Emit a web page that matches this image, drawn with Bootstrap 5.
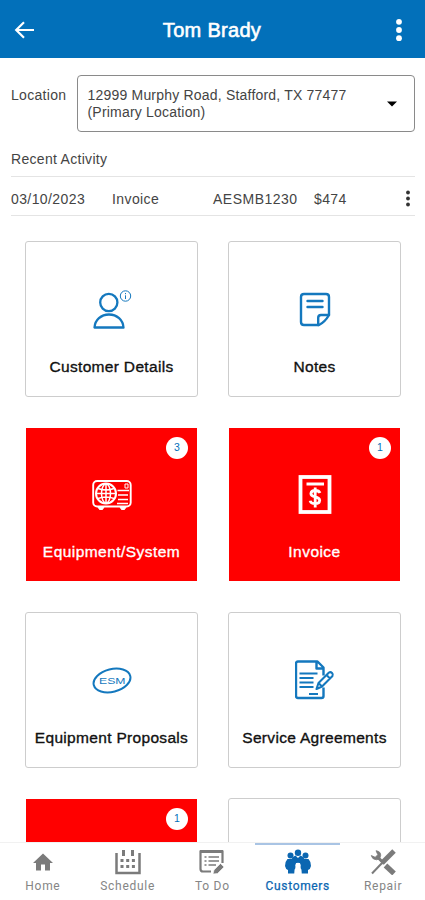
<!DOCTYPE html>
<html lang="en">
<head>
<meta charset="utf-8">
<meta name="viewport" content="width=device-width, initial-scale=1">
<title>Tom Brady</title>
<link rel="stylesheet" href="https://cdn.jsdelivr.net/npm/bootstrap@5.3.0/dist/css/bootstrap.min.css">
<style>
  body { font-family: "Liberation Sans", Arial, sans-serif; color: #444; font-size: 14px; }
  svg { display: block; }
  .screen { height: 900px; overflow: hidden; }
  .topbar { height: 58px; background: #0270ba; padding: 2px 15px 0 14px; }
  .topbar h1 { font-size: 20px; line-height: 24px; letter-spacing: .3px; -webkit-text-stroke: .6px #fff; font-weight: 400; }
  .location { padding: 17px 10px 0 11px; }
  .loc-label { width: 65.5px; padding-top: 12px; line-height: 17px; letter-spacing: .3px; }
  .loc-select { height: 57px; border: 1px solid #8a8a8a; border-radius: 4px; padding: 0 17px 0 10px; line-height: 17px; letter-spacing: .2px; }
  .activity { margin: 0 10px 0 11px; }
  .activity h2 { font-size: 14px; line-height: 17px; margin: 0; padding: 19px 0 8px; letter-spacing: .3px; height: 44px; }
  .activity-row { height: 40px; border-top: 1.5px solid #e4e4e4; border-bottom: 1.5px solid #e4e4e4; padding-top: 6px; }
  .c-date { width: 101px; letter-spacing: .4px; }
  .c-type { width: 101px; letter-spacing: .4px; }
  .c-num { width: 101px; letter-spacing: .5px; }
  .c-sum { letter-spacing: .4px; }
  .tiles { display: grid; grid-template-columns: 173px 173px; column-gap: 30px; grid-auto-rows: 156px; row-gap: 29.5px; padding: 25px 0 0 25px; }
  .tile { border: 1.5px solid #cdcdcd; border-radius: 3px; background: #fff; color: #111; }
  .tile.alerting { background: red; color: #fff; border: 0; border-radius: 0; margin: 1px 1px 2px; }
  .tile-icon { height: 40px; margin-top: 47px; }
  .tile-name { margin-top: 28px; font-size: 15.5px; line-height: 20px; letter-spacing: .32px; white-space: nowrap; -webkit-text-stroke: .35px currentColor; }
  .alerting .tile-name { margin-top: 27px; letter-spacing: .45px; }
  .count { top: 9px; right: 9px; width: 22px; height: 22px; background: #fff; color: #0270ba; font-size: 10.5px; }
  .tabs { height: 58px; background: #fff; border-top: 1px solid #f1f1f1; font-family: Roboto, sans-serif; font-size: 12px; letter-spacing: .7px; }
  .tab-item { flex: 1 1 0; border-top: 2px solid transparent; padding: 4px 0 0 1px; color: #858585; }
  .tab-item span { line-height: 16px; margin-top: 3px; }
  .tab-item.current { color: #0b66b1; letter-spacing: .65px; -webkit-text-stroke: .25px currentColor; }
  .tab-item.current::before { content: ""; width: 85px; height: 2px; background: #a9c4e4; margin: -6px 0 4px; }
</style>
</head>
<body>
<div class="screen d-flex flex-column position-relative bg-white">
  <header class="topbar d-flex align-items-center justify-content-between text-white flex-shrink-0">
    <svg width="22" height="20" viewBox="0 0 22 20" fill="none" stroke="#fff" stroke-width="2.200"><path d="M20 10H2.500M10 2.300 2.200 10l7.800 7.700"/></svg>
    <h1 class="m-0">Tom Brady</h1>
    <svg width="22" height="26" viewBox="0 0 22 26" fill="#fff"><circle cx="11" cy="4.800" r="2.900"/><circle cx="11" cy="13" r="2.900"/><circle cx="11" cy="21.200" r="2.900"/></svg>
  </header>

  <main class="flex-grow-1 overflow-hidden">
    <div class="location d-flex">
      <div class="loc-label flex-shrink-0">Location</div>
      <div class="loc-select flex-grow-1 d-flex align-items-center justify-content-between">
        <div>12999 Murphy Road, Stafford, TX 77477<br>(Primary Location)</div>
        <svg width="10" height="6" viewBox="0 0 10 6"><path d="M0 .5h10L5 5.500z" fill="#000"/></svg>
      </div>
    </div>

    <section class="activity">
      <h2>Recent Activity</h2>
      <div class="activity-row d-flex align-items-center">
        <div class="c-date">03/10/2023</div>
        <div class="c-type">Invoice</div>
        <div class="c-num">AESMB1230</div>
        <div class="c-sum">$474</div>
        <svg class="ms-auto me-1" width="6" height="18" viewBox="0 0 6 18" fill="#333"><circle cx="3" cy="2.500" r="1.900"/><circle cx="3" cy="8.500" r="1.900"/><circle cx="3" cy="14.500" r="1.900"/></svg>
      </div>
    </section>

    <section class="tiles">
      <div class="tile d-flex flex-column align-items-center">
        <div class="tile-icon">
          <svg width="40" height="40" viewBox="0 -1 40 40" fill="none" stroke="#1478be" stroke-width="2.300"><circle cx="16.800" cy="12.500" r="8.600"/><path d="M2.500 37.500c.5-7.500 6.500-13 14.500-13s14 5.500 14.500 13z" stroke-linejoin="round"/><g stroke-width="1"><circle cx="33.500" cy="6" r="5.200"/><path d="M33.500 5.300v3.700M33.500 3v1.200"/></g></svg>
        </div>
        <div class="tile-name">Customer Details</div>
      </div>
      <div class="tile d-flex flex-column align-items-center">
        <div class="tile-icon">
          <svg width="40" height="40" viewBox="0 -1 40 40" fill="none" stroke="#1478be" stroke-width="2.400" stroke-linejoin="round" stroke-linecap="round"><path d="M9 4h22q3 0 3 3v18q-4 7-10 10H9q-3 0-3-3V7q0-3 3-3z"/><path d="M34 25h-8q-2.800 0-2.800 2.800V35M12.500 11h15M12.500 17h15"/></svg>
        </div>
        <div class="tile-name">Notes</div>
      </div>

      <div class="tile alerting position-relative d-flex flex-column align-items-center">
        <div class="count position-absolute rounded-circle d-flex align-items-center justify-content-center">3</div>
        <div class="tile-icon">
          <svg width="40" height="40" viewBox="0 0 40 40" fill="none" stroke="#fff"><rect x="1.200" y="6" width="37.500" height="25.500" rx="4" stroke-width="1.900"/><circle cx="14" cy="18.500" r="10" stroke-width="2"/><ellipse cx="14" cy="18.500" rx="4.500" ry="9.500" stroke-width="1.500"/><path d="M4 18.500h20M14 8.500v20M6 13.500q8 3 16 0M6 23.500q8-3 16 0" stroke-width="1.500"/><path d="M25.500 15.500H37M26 20h10M26 24.500h10M25 28.500h11" stroke-width="1.600"/><path d="M33 9h3v4h-3z" stroke-width="1"/><path d="M6 32h6l-1.500 2.500h-3zM28 32h6l-1.500 2.500h-3z" fill="#fff"/></svg>
        </div>
        <div class="tile-name">Equipment/System</div>
      </div>
      <div class="tile alerting position-relative d-flex flex-column align-items-center">
        <div class="count position-absolute rounded-circle d-flex align-items-center justify-content-center">1</div>
        <div class="tile-icon">
          <svg width="40" height="40" viewBox="0 0 40 40" fill="none" stroke="#fff"><rect x="5.500" y="2" width="29" height="35" stroke-width="3.800"/><path d="M11.500 9h17.500" stroke-width="3"/><path d="M25 18q-1-2.500-4.800-2.500t-4.300 3q0 2.500 4.300 3.300t4.500 3.600q-.3 3.300-4.600 3.300t-5-3M20.200 12.500v20" stroke-width="2.800"/></svg>
        </div>
        <div class="tile-name">Invoice</div>
      </div>

      <div class="tile d-flex flex-column align-items-center">
        <div class="tile-icon">
          <svg width="40" height="40" viewBox="0 -.5 40 40"><ellipse cx="20" cy="20" rx="18.800" ry="11.300" fill="none" stroke="#1478be" stroke-width="2" transform="rotate(-14 20 20)"/><text x="7" y="23.300" font-size="9" textLength="26.500" lengthAdjust="spacingAndGlyphs" fill="#1478be">ESM</text></svg>
        </div>
        <div class="tile-name">Equipment Proposals</div>
      </div>
      <div class="tile d-flex flex-column align-items-center">
        <div class="tile-icon">
          <svg width="40" height="40" viewBox="0 -.5 40 40" fill="none" stroke="#1478be" stroke-width="2.400" stroke-linejoin="round"><path d="M28.500 27v8.500q0 2-2 2H3q-2 0-2-2V3q0-2 2-2h19.500L28.500 7V15M21.500 1v7h7"/><path d="M4.500 13h18M4.500 17.500h14M4.500 22h14M4.500 26.500h14M14 33.500h9" stroke-width="2.100"/><path d="m21.500 28.500 2-6L34 12q1.500-1 3 .5t.5 3L27 26zM23.500 22.500l3.500 3.500M31.500 14.500l3.500 3.500" stroke-width="2.100"/></svg>
        </div>
        <div class="tile-name">Service Agreements</div>
      </div>

      <div class="tile alerting position-relative">
        <div class="count position-absolute rounded-circle d-flex align-items-center justify-content-center">1</div>
      </div>
      <div class="tile"></div>
    </section>
  </main>

  <nav class="tabs d-flex flex-shrink-0">
    <div class="tab-item d-flex flex-column align-items-center">
      <svg width="28" height="26" viewBox="0 0 28 26" fill="#7b7b7b"><path d="m14 4.500 10 9.500h-3v7.500h-5v-6h-4v6H7V14H4z"/></svg>
      <span>Home</span>
    </div>
    <div class="tab-item d-flex flex-column align-items-center">
      <svg width="28" height="26" viewBox="0 0 28 26" fill="none" stroke="#7b7b7b"><path d="M2.500 4v20h23V4" stroke-width="2.500"/><path d="M9.500 1v6M18.500 1v6" stroke-width="3"/><path d="M6.500 11.500h15M6.500 17.500h15" stroke-width="3" stroke-dasharray="3 2.700"/></svg>
      <span>Schedule</span>
    </div>
    <div class="tab-item d-flex flex-column align-items-center">
      <svg width="28" height="26" viewBox="0 0 28 26" fill="none" stroke="#7b7b7b"><path d="M13 22.500H5q-2.500 0-2.500-2.500V2.500h22V14" stroke-width="2.200"/><path d="M2 2.500h23" stroke-width="3"/><path d="M6.500 8h2M10.500 8H21M6.500 12h2M10.500 12H21M6.500 16h2M10.500 16H18" stroke-width="1.700"/><path d="m15 25 1-4 6.500-6.500 3.500 3.500-6.500 6.500z" fill="#7b7b7b" stroke="#fff" stroke-width=".6"/></svg>
      <span>To Do</span>
    </div>
    <div class="tab-item current d-flex flex-column align-items-center">
      <svg width="28" height="26" viewBox="0 0 28 26" fill="#0b66b1"><circle cx="6.500" cy="6.500" r="3"/><circle cx="14" cy="3.800" r="3.200"/><circle cx="21.500" cy="6.500" r="3"/><path d="M3.500 10h4q1.500-3 4-3.500L14 9l2.500-2.500q2.500.5 4 3.500h4q2.500 2.500 2.500 7-.5 3-3 4v3.500h-6.500L16 14h-4l-1.500 10.500H4V21q-2.500-1-3-4 0-4.500 2.500-7z"/><circle cx="14" cy="16.300" r="2.500" fill="#fff"/><path d="M10.500 25v-4.500q3.500-3.500 7 0V25z" fill="#fff"/></svg>
      <span>Customers</span>
    </div>
    <div class="tab-item d-flex flex-column align-items-center">
      <svg width="28" height="26" viewBox="0 0 28 26" fill="none" stroke="#7b7b7b"><path d="M25 2 13 14" stroke-width="5"/><path d="M13 14 3 24.500" stroke-width="2"/><path d="m16.500 16.500 8.500 8" stroke-width="5.200"/><path d="m9 8.500 6 6" stroke-width="3"/><path d="M7 1.700Q12 2.500 11.700 6.500T7.500 10.800Q3 10.500 2.300 6.500l3.900 1.800 2.600-2.600z" fill="#7b7b7b" stroke-width=".8"/></svg>
      <span>Repair</span>
    </div>
  </nav>
</div>
<script src="https://cdn.jsdelivr.net/npm/bootstrap@5.3.0/dist/js/bootstrap.bundle.min.js"></script>
</body>
</html>
